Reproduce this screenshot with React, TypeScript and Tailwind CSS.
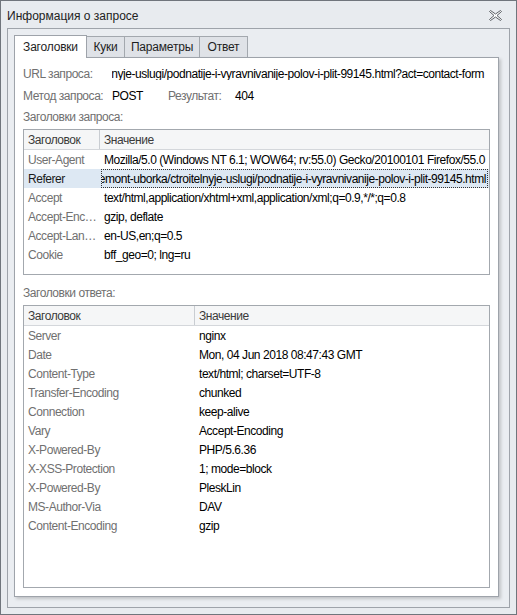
import React from 'react';

const requestHeaders: [string, string][] = [
  ['User-Agent', 'Mozilla/5.0 (Windows NT 6.1; WOW64; rv:55.0) Gecko/20100101 Firefox/55.0'],
  ['Referer', 'http://example/remont-uborka/ctroitelnyje-uslugi/podnatije-i-vyravnivanije-polov-i-plit-99145.html'],
  ['Accept', 'text/html,application/xhtml+xml,application/xml;q=0.9,*/*;q=0.8'],
  ['Accept-Enc…', 'gzip, deflate'],
  ['Accept-Lan…', 'en-US,en;q=0.5'],
  ['Cookie', 'bff_geo=0; lng=ru'],
];

const responseHeaders: [string, string][] = [
  ['Server', 'nginx'],
  ['Date', 'Mon, 04 Jun 2018 08:47:43 GMT'],
  ['Content-Type', 'text/html; charset=UTF-8'],
  ['Transfer-Encoding', 'chunked'],
  ['Connection', 'keep-alive'],
  ['Vary', 'Accept-Encoding'],
  ['X-Powered-By', 'PHP/5.6.36'],
  ['X-XSS-Protection', '1; mode=block'],
  ['X-Powered-By', 'PleskLin'],
  ['MS-Author-Via', 'DAV'],
  ['Content-Encoding', 'gzip'],
];

const CloseIcon = () => (
  <svg width="13" height="11" viewBox="0 0 13 11">
    <polygon
      points="0.5,1.5 1.5,0.5 6.5,4 11.5,0.5 12.5,1.5 8,5.5 12.5,9.5 11.5,10.5 6.5,7 1.5,10.5 0.5,9.5 5,5.5"
      fill="#fff"
      stroke="#5a5e64"
      strokeWidth="1"
      strokeLinejoin="round"
    />
  </svg>
);

const Tab = ({ label, width, active }: { label: string; width: string; active?: boolean }) =>
  active ? (
    <div className={`${width} h-[23px] -mb-px bg-white border border-b-0 border-[#9ea3aa] flex items-center justify-center text-[#1e1e1e] z-10`}>
      {label}
    </div>
  ) : (
    <div className={`${width} h-[21px] bg-[#dfe2e7] border border-l-0 border-b-0 border-[#a3a8ae] flex items-center justify-center text-[#1e1e1e]`}>
      {label}
    </div>
  );

const HeaderTable = ({
  rows,
  nameWidth,
  selected,
  className,
}: {
  rows: [string, string][];
  nameWidth: string;
  selected?: number;
  className: string;
}) => (
  <div className={`${className} border border-[#a3a8ae] bg-white flex flex-col`}>
    <div className="h-[20px] flex border-b border-[#d4d7db] bg-[#f5f6f7] text-[#3a3a3a]">
      <div className={`${nameWidth} shrink-0 pl-[4px] border-r border-[#c9cdd2] flex items-center`}>Заголовок</div>
      <div className="flex-1 pl-[4px] flex items-center">Значение</div>
    </div>
    {rows.map(([name, value], i) => {
      const isSel = i === selected;
      return (
        <div key={i} className={`h-[19px] flex ${isSel ? 'bg-[#dde8f3]' : ''}`}>
          <div className={`${nameWidth} shrink-0 pl-[4px] flex items-center whitespace-nowrap overflow-hidden ${isSel ? 'text-[#1a1a1a]' : 'text-[#707070]'}`}>
            {name}
          </div>
          {isSel ? (
            <div className="flex-1 min-w-0 ml-[1px] mr-[1px] border border-dotted border-[#333] flex items-center justify-end overflow-hidden whitespace-nowrap pr-[1px] text-black">
              {value}
            </div>
          ) : (
            <div className="flex-1 min-w-0 pl-[4px] flex items-center whitespace-nowrap overflow-hidden text-black">
              {value}
            </div>
          )}
        </div>
      );
    })}
  </div>
);

export default function App() {
  return (
    <div className="w-[517px] h-[615px] bg-[#e8ebef] border border-[#70757c] flex flex-col font-['Liberation_Sans',Arial,sans-serif] text-[12px] leading-none">
      <div className="h-[27px] shrink-0 flex items-center justify-between pl-[6px] pr-[14px] pt-[2px]">
        <span className="text-[#222]">Информация о запросе</span>
        <CloseIcon />
      </div>

      <div className="flex-1 mx-[6px] mb-[6px] border border-[#9ea3aa] bg-[#eaedf1] pl-[6px] pr-[10px] pt-[5px] pb-[10px] flex flex-col">
        <div className="flex items-end h-[23px] shrink-0 tracking-[-0.2px]">
          <Tab label="Заголовки" width="w-[73px]" active />
          <Tab label="Куки" width="w-[38px]" />
          <Tab label="Параметры" width="w-[75px]" />
          <Tab label="Ответ" width="w-[48px]" />
        </div>

        <div className="flex-1 bg-white border border-[#9ea3aa] shadow-[2px_2px_3px_rgba(0,0,0,0.18)] px-[8px] pt-[5px] pb-[8px] flex flex-col tracking-[-0.45px]">
          <div className="h-[22px] flex items-center shrink-0">
            <span className="w-[89px] shrink-0 text-[#707070]">URL запроса:</span>
            <div className="flex-1 min-w-0 overflow-hidden whitespace-nowrap flex justify-end pr-[6px] text-black">
              <span className="shrink-0">ctroitelnyje-uslugi/podnatije-i-vyravnivanije-polov-i-plit-99145.html?act=contact-form</span>
            </div>
          </div>
          <div className="h-[22px] flex items-center shrink-0">
            <span className="w-[89px] shrink-0 text-[#707070]">Метод запроса:</span>
            <span className="w-[56px] text-black">POST</span>
            <span className="w-[67px] text-[#707070]">Результат:</span>
            <span className="text-black">404</span>
          </div>
          <div className="h-[20px] flex items-center shrink-0 text-[#707070]">Заголовки запроса:</div>
          <HeaderTable rows={requestHeaders} nameWidth="w-[76px]" selected={1} className="mt-[2px] h-[146px] shrink-0" />

          <div className="h-[20px] mt-[8px] flex items-center shrink-0 text-[#707070]">Заголовки ответа:</div>
          <HeaderTable rows={responseHeaders} nameWidth="w-[171px]" className="mt-[2px] flex-1" />
        </div>
      </div>
    </div>
  );
}
